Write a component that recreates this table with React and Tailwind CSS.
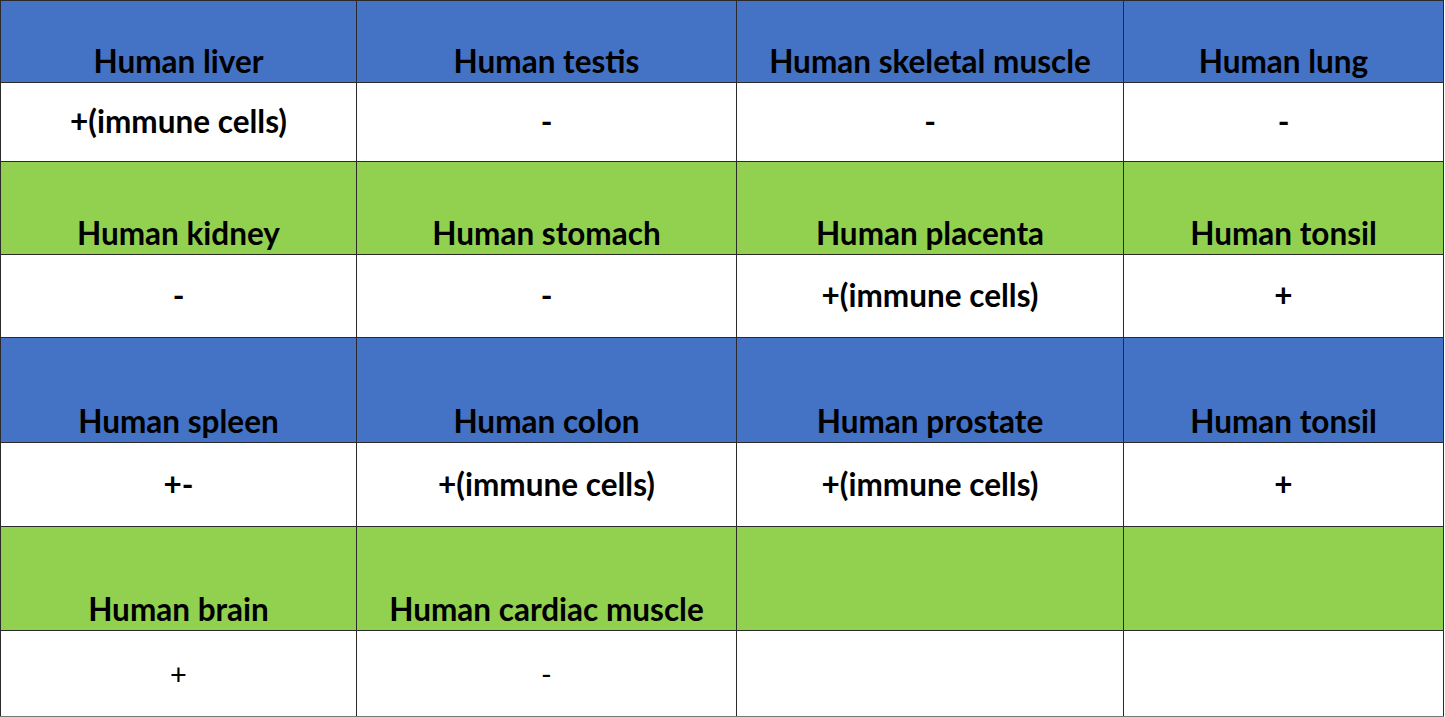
import React from "react";

const rows = [
  {
    color: "bg-[#4472c4]",
    h: "h-[82px]",
    vh: "h-[79px]",
    items: [
      ["Human liver", "+(immune cells)"],
      ["Human testis", "-"],
      ["Human skeletal muscle", "-"],
      ["Human lung", "-"],
    ],
  },
  {
    color: "bg-[#92d050]",
    h: "h-[93px]",
    vh: "h-[83px]",
    items: [
      ["Human kidney", "-"],
      ["Human stomach", "-"],
      ["Human placenta", "+(immune cells)"],
      ["Human tonsil", "+"],
    ],
  },
  {
    color: "bg-[#4472c4]",
    h: "h-[105px]",
    vh: "h-[84px]",
    items: [
      ["Human spleen", "+-"],
      ["Human colon", "+(immune cells)"],
      ["Human prostate", "+(immune cells)"],
      ["Human tonsil", "+"],
    ],
  },
  {
    color: "bg-[#92d050]",
    h: "h-[104px]",
    vh: "h-[86px]",
    light: true,
    items: [
      ["Human brain", "+"],
      ["Human cardiac muscle", "-"],
      ["", ""],
      ["", ""],
    ],
  },
];

const cols = ["w-[356px]", "w-[380px]", "w-[387px]", "w-[320px]"];

export default function App() {
  return (
    <div className="w-[1445px] h-[717px] bg-white overflow-hidden" style={{ fontFamily: "Lato, 'Open Sans', sans-serif" }}>
      <table className="border-collapse border-b-2 border-b-[#777] border-r border-r-[#333] table-fixed">
        <tbody>
          {rows.map((row, ri) => (
            <React.Fragment key={ri}>
              <tr className={`${row.color} ${row.h}`}>
                {row.items.map(([name], ci) => (
                  <td
                    key={ci}
                    className={`${cols[ci]} border border-[#2a2a2a] align-bottom text-center pb-[5px] text-[31.5px] font-bold text-black leading-none`}
                  >
                    {name}
                  </td>
                ))}
              </tr>
              <tr className={`bg-white ${row.vh}`}>
                {row.items.map(([, val], ci) => (
                  <td
                    key={ci}
                    className={`${cols[ci]} border border-[#2a2a2a] align-middle text-center text-black leading-none ${row.light ? "font-normal text-[29px]" : "font-bold text-[31.5px]"}`}
                  >
                    {val}
                  </td>
                ))}
              </tr>
            </React.Fragment>
          ))}
        </tbody>
      </table>
    </div>
  );
}
